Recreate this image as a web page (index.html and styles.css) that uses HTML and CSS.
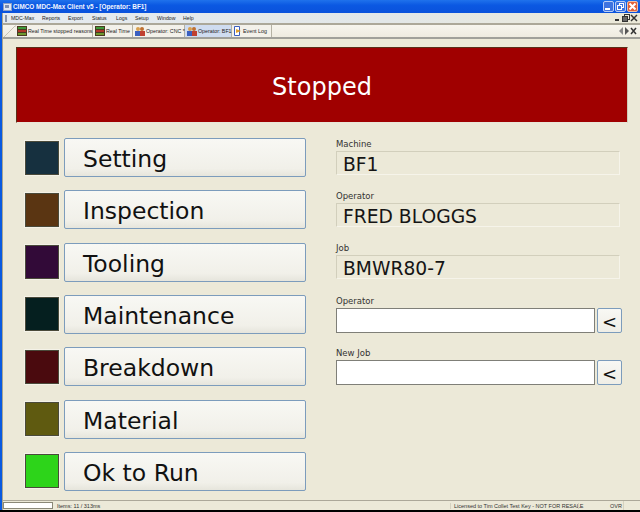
FILE: index.html
```html
<!DOCTYPE html>
<html lang="en">
<head>
<meta charset="utf-8">
<title>CIMCO MDC-Max Client v5</title>
<link rel="stylesheet" href="styles.css">
</head>
<body>
<div class="window">
  <header class="titlebar">
    <svg class="app-icon" width="9" height="9" viewBox="0 0 9 9"><rect x="0.5" y="1.5" width="8" height="7" fill="#dfe6f2" stroke="#8fa2c4"/><rect x="2" y="3" width="4" height="3" fill="#7d8fb0"/></svg>
    <span class="title-text">CIMCO MDC-Max Client v5 - [Operator: BF1]</span>
    <div class="win-buttons">
      <span class="win-btn"><svg width="9" height="9" viewBox="0 0 9 9"><rect x="1" y="6" width="5" height="2" fill="#fff"/></svg></span>
      <span class="win-btn"><svg width="9" height="9" viewBox="0 0 9 9"><rect x="3.5" y="1.5" width="4" height="4" fill="none" stroke="#fff"/><rect x="1.5" y="3.5" width="4" height="4" fill="#3f74e0" stroke="#fff"/></svg></span>
      <span class="win-btn close"><svg width="9" height="9" viewBox="0 0 9 9"><path d="M1.5 1.5l6 6M7.5 1.5l-6 6" stroke="#fff" stroke-width="2"/></svg></span>
    </div>
  </header>
  <div class="inner">
    <nav class="menubar">
      <i class="grip"></i>
      <span class="menu m1">MDC-Max</span><span class="menu m2">Reports</span><span class="menu m3">Export</span><span class="menu m4">Status</span><span class="menu m5">Logs</span><span class="menu m6">Setup</span><span class="menu m7">Window</span><span class="menu m8">Help</span>
      <div class="mdi-buttons">
        <svg width="8" height="8" viewBox="0 0 8 8"><rect x="1" y="5" width="4" height="2" fill="#333"/></svg>
        <svg width="8" height="8" viewBox="0 0 8 8"><rect x="2.5" y="0.5" width="5" height="5" fill="none" stroke="#333"/><rect x="0.5" y="2.5" width="5" height="5" fill="#666" stroke="#333"/></svg>
        <svg width="8" height="8" viewBox="0 0 8 8"><path d="M1 1l6 6M7 1l-6 6" stroke="#333" stroke-width="1.5"/></svg>
      </div>
    </nav>
    <div class="tabbar">
      <svg class="tab-slant" width="12" height="12" viewBox="0 0 12 12"><path d="M0 12L11 1h1" fill="none" stroke="#c5c2b4"/></svg>
      <div class="tab t1"><svg class="chart" width="10" height="10" viewBox="0 0 10 10"><rect width="10" height="10" fill="#4a3a20"/><rect x="1" y="1" width="8" height="2" fill="#3f9a3a"/><rect x="1" y="4" width="8" height="2" fill="#b03528"/><rect x="1" y="7" width="8" height="2" fill="#6d9a30"/></svg>Real Time stopped reasons</div>
      <div class="tab t2"><svg class="chart" width="10" height="10" viewBox="0 0 10 10"><rect width="10" height="10" fill="#4a3a20"/><rect x="1" y="1" width="8" height="2" fill="#3f9a3a"/><rect x="1" y="4" width="8" height="2" fill="#b03528"/><rect x="1" y="7" width="8" height="2" fill="#6d9a30"/></svg>Real Time</div>
      <div class="tab t3"><svg class="users" width="10" height="9" viewBox="0 0 10 9"><circle cx="3" cy="2" r="2" fill="#d8a050"/><circle cx="7" cy="2" r="2" fill="#c07030"/><rect x="0" y="4" width="5" height="5" fill="#3a5fc0"/><rect x="5" y="4" width="5" height="5" fill="#c04030"/></svg>Operator: CNC *</div>
      <div class="tab t4 active"><svg class="users" width="10" height="9" viewBox="0 0 10 9"><circle cx="3" cy="2" r="2" fill="#d8a050"/><circle cx="7" cy="2" r="2" fill="#c07030"/><rect x="0" y="4" width="5" height="5" fill="#3a5fc0"/><rect x="5" y="4" width="5" height="5" fill="#c04030"/></svg>Operator: BF1</div>
      <div class="tab t5"><svg class="log" width="9" height="10" viewBox="0 0 9 10"><path d="M1.5 .5h5v9h-5z" fill="#fff" stroke="#3a5fc0"/><path d="M3 3l5 2-5 2z" fill="#e0a030"/></svg>Event Log</div>
      <div class="tab-nav">
        <svg width="6" height="8" viewBox="0 0 6 8"><path d="M5 0v8L1 4z" fill="#888"/></svg>
        <svg width="6" height="8" viewBox="0 0 6 8"><path d="M1 0v8l4-4z" fill="#555"/></svg>
        <svg width="7" height="8" viewBox="0 0 7 8"><path d="M1 1l5 6M6 1l-5 6" stroke="#333" stroke-width="1.5"/></svg>
      </div>
    </div>
    <main class="content">
      <div class="banner">Stopped</div>
      <div class="panels">
        <section class="reasons">
          <div class="reason"><span class="swatch s1"></span><button class="reason-btn">Setting</button></div>
          <div class="reason"><span class="swatch s2"></span><button class="reason-btn">Inspection</button></div>
          <div class="reason"><span class="swatch s3"></span><button class="reason-btn">Tooling</button></div>
          <div class="reason"><span class="swatch s4"></span><button class="reason-btn">Maintenance</button></div>
          <div class="reason"><span class="swatch s5"></span><button class="reason-btn">Breakdown</button></div>
          <div class="reason"><span class="swatch s6"></span><button class="reason-btn">Material</button></div>
          <div class="reason"><span class="swatch s7"></span><button class="reason-btn">Ok to Run</button></div>
        </section>
        <section class="fields">
          <div class="field"><label class="field-label">Machine</label><div class="readout">BF1</div></div>
          <div class="field"><label class="field-label">Operator</label><div class="readout">FRED BLOGGS</div></div>
          <div class="field"><label class="field-label">Job</label><div class="readout">BMWR80-7</div></div>
          <div class="field entry-field"><label class="field-label">Operator</label><div class="entry"><input class="entry-input" type="text"><button class="back-btn">&lt;</button></div></div>
          <div class="field entry-field"><label class="field-label">New Job</label><div class="entry"><input class="entry-input" type="text"><button class="back-btn">&lt;</button></div></div>
        </section>
      </div>
    </main>
    <footer class="statusbar">
      <span class="progress"></span>
      <span class="status-items">Items: 11 / 313ms</span>
      <span class="status-license">Licensed to Tim Collet Test Key - NOT FOR RESALE</span>
      <span class="status-ovr">OVR</span>
      <span class="status-end"></span>
    </footer>
  </div>
  <div class="bottom-edge"></div>
</div>
</body>
</html>
```
FILE: styles.css
```css
* { box-sizing: border-box; }
html, body { margin: 0; padding: 0; }
body { width: 640px; height: 512px; overflow: hidden; font-family: "DejaVu Sans", sans-serif; background: #000; }
.window { width: 640px; height: 512px; display: flex; flex-direction: column; background: #0a5ae0; }
.titlebar { height: 13px; flex: none; display: flex; align-items: center; padding-left: 3px; background: linear-gradient(#1f72ec, #0b58e2 40%, #0a52dc); color: #fff; }
.app-icon { margin-right: 1px; flex: none; }
.title-text { font: bold 6.4px/13px "Liberation Sans", sans-serif; color: #f2f6ff; }
.win-buttons { margin-left: auto; display: flex; gap: 1px; padding-right: 2px; }
.win-btn { width: 11px; height: 11px; border: 1px solid #b8cdf5; border-radius: 2px; background: #3f74e0; display: flex; align-items: center; justify-content: center; overflow: hidden; }
.win-btn svg { flex: none; }
.win-btn.close { background: #e0603a; border-color: #eec0a8; }
.inner { flex: 1; min-height: 0; display: flex; flex-direction: column; margin-left: 2px; background: #ece9d8; border-left: 1px solid #a9a590; }
.menubar { height: 12px; flex: none; display: flex; align-items: center; padding-left: 2px; background: linear-gradient(90deg, #e6ebf0, #e2e7e8 60%, #ece9d8); border-bottom: 2px solid #aca899; font: 5.2px "Liberation Sans", sans-serif; color: #222; }
.grip { width: 2px; height: 7px; margin-right: 4px; background: #8a96aa; }
.menu { white-space: nowrap; flex: none; }
.m1 { width: 31px; }
.m2 { width: 26px; }
.m3 { width: 24px; }
.m4 { width: 24px; }
.m5 { width: 19px; }
.m6 { width: 22px; }
.m7 { width: 26px; }
.mdi-buttons { margin-left: auto; display: flex; align-items: center; padding-right: 2px; }
.tabbar { height: 14px; flex: none; display: flex; align-items: flex-end; padding-left: 1px; background: linear-gradient(#f7f5ee, #eeebe0); border-bottom: 2px solid #a0a09a; font: 5.3px "Liberation Sans", sans-serif; color: #222; }
.tab-slant { flex: none; }
.tab { height: 12px; display: flex; align-items: center; gap: 1px; padding-left: 2px; border-right: 1px solid #b5b2a4; white-space: nowrap; background: #f3f1ea; flex: none; }
.tab svg { flex: none; }
.t1 { width: 77px; padding-left: 1px; }
.t2 { width: 40px; }
.t3 { width: 52px; }
.t4 { width: 47px; }
.t5 { width: 40px; padding-left: 1px; }
.tab.active { background: #cfdcf0; }
.tab-nav { margin-left: auto; display: flex; align-items: center; height: 12px; padding-right: 3px; }
.content { flex: 1; min-height: 0; display: flex; flex-direction: column; padding: 8px 12px 0 13px; }
.banner { height: 76px; flex: none; padding-top: 3px; background: #a00000; border: 1px solid #5a3018; border-right-color: #cfccb8; border-bottom-color: #e8e6d8; color: #fff; font-size: 24px; display: flex; align-items: center; justify-content: center; }
.panels { display: flex; padding-top: 15px; }
.reasons { width: 290px; padding-left: 9px; display: flex; flex-direction: column; gap: 13.33px; flex: none; }
.reason { display: flex; align-items: center; gap: 5px; height: 39px; }
.swatch { width: 34px; height: 34px; flex: none; border: 1px solid #4a4a3a; box-shadow: 0 0 0 1px #f4f2e8; }
.s1 { background: #16303f; }
.s2 { background: #5a3512; }
.s3 { background: #320a38; }
.s4 { background: #051f1f; }
.s5 { background: #4a0a0e; }
.s6 { background: #5f5a10; }
.s7 { background: #2dd41a; }
.reason-btn { width: 242px; height: 39px; flex: none; padding: 3px 0 0 18px; text-align: left; font: 23.5px/34px "DejaVu Sans", sans-serif; color: #111; background: linear-gradient(#f8f8f4, #f1f0e9 80%, #e6e5dc); border: 1px solid #7c9cbc; border-radius: 2px; }
.fields { width: 286px; margin-left: 30px; flex: none; display: flex; flex-direction: column; gap: 17px; padding-top: 2px; }
.field { display: flex; flex-direction: column; }
.field-label { font-size: 8.5px; line-height: 8px; height: 11px; color: #333; }
.readout { width: 284px; height: 24px; border: 1px solid; border-color: #d2cfbc #f6f4ea #f6f4ea #d2cfbc; padding: 2px 0 0 6px; font-size: 18.7px; line-height: 22px; color: #151515; }
.entry-field { margin-bottom: -1px; }
.field:nth-child(4) { margin-top: 1px; }
.entry { display: flex; gap: 2px; }
.entry-input { width: 259px; height: 25px; margin: 0; padding: 0; background: #fff; border: 1px solid #7f7f78; }
.back-btn { width: 25px; height: 25px; margin: 0; padding: 2px 0 0; font: 18px/21px "DejaVu Sans", sans-serif; color: #111; background: linear-gradient(#f8f8f4, #efeee6); border: 1px solid #7c9cbc; border-radius: 2px; }
.statusbar { height: 10px; flex: none; display: flex; align-items: center; margin-top: auto; border-top: 1px solid #aca899; font: 5.5px "Liberation Sans", sans-serif; color: #333; background: #ece9d8; }
.progress { width: 50px; height: 7px; background: #fff; border: 1px solid #8a8878; flex: none; }
.status-items { margin-left: 4px; }
.status-license { margin-left: auto; border-left: 1px solid #d5d2c0; padding-left: 3px; width: 128px; white-space: nowrap; }
.status-ovr { width: 45px; padding-left: 31px; border-left: 1px solid #d5d2c0; }
.status-end { width: 17px; height: 9px; border-left: 1px solid #d5d2c0; }
.bottom-edge { height: 2px; flex: none; background: #000; }
```
